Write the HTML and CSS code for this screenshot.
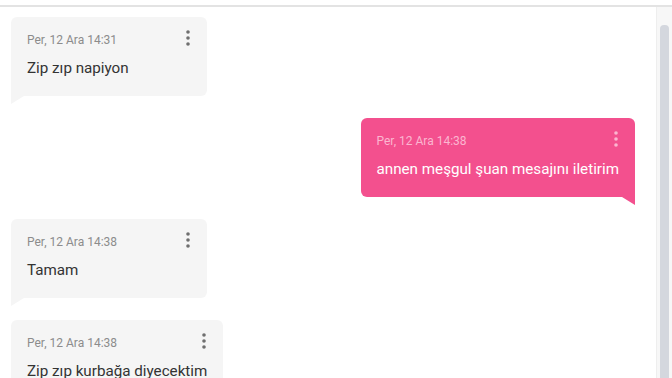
FILE: index.html
```
<!DOCTYPE html>
<html lang="tr">
<head>
    <meta charset="UTF-8">
    <meta name="viewport" content="width=device-width, initial-scale=1.0">
    <title>Mesajlar</title>
    <link rel="stylesheet" href="styles.css">
</head>
<body>
    <div class="topbar"></div>

    <div class="wrapper">
        <div class="chat">
            <div class="row">
                <div class="bubble in">
                    <div class="time">Per, 12 Ara 14:31</div>
                    <div class="text">Zip zıp napiyon</div>
                    <svg class="menu" width="4" height="16" viewBox="0 0 4 16"><circle cx="2" cy="2" r="1.8"/><circle cx="2" cy="8" r="1.8"/><circle cx="2" cy="14" r="1.8"/></svg>
                </div>
            </div>

            <div class="row mine">
                <div class="bubble out">
                    <div class="time">Per, 12 Ara 14:38</div>
                    <div class="text">annen meşgul şuan mesajını iletirim</div>
                    <svg class="menu" width="4" height="16" viewBox="0 0 4 16"><circle cx="2" cy="2" r="1.8"/><circle cx="2" cy="8" r="1.8"/><circle cx="2" cy="14" r="1.8"/></svg>
                </div>
            </div>

            <div class="row">
                <div class="bubble in">
                    <div class="time">Per, 12 Ara 14:38</div>
                    <div class="text">Tamam</div>
                    <svg class="menu" width="4" height="16" viewBox="0 0 4 16"><circle cx="2" cy="2" r="1.8"/><circle cx="2" cy="8" r="1.8"/><circle cx="2" cy="14" r="1.8"/></svg>
                </div>
            </div>

            <div class="row">
                <div class="bubble in">
                    <div class="time">Per, 12 Ara 14:38</div>
                    <div class="text">Zip zıp kurbağa diyecektim</div>
                    <svg class="menu" width="4" height="16" viewBox="0 0 4 16"><circle cx="2" cy="2" r="1.8"/><circle cx="2" cy="8" r="1.8"/><circle cx="2" cy="14" r="1.8"/></svg>
                </div>
            </div>
        </div>

        <div class="scroll">
            <div class="thumb"></div>
        </div>
    </div>
</body>
</html>
```

FILE: styles.css
```
html, body {
    margin: 0;
    padding: 0;
    height: 100%;
    overflow: hidden;
}
body {
    font-family: Roboto, "Noto Sans", Arial, sans-serif;
    background-color: #fff;
    color: #333;
}
.topbar {
    height: 5px;
    border-bottom: 2px solid #e3e3e3;
}
.wrapper {
    display: flex;
    height: calc(100% - 7px);
}
.chat {
    flex: 1;
    display: flex;
    flex-direction: column;
    gap: 14px;
    padding: 10px 21px 0 11px;
}
.row {
    display: flex;
    justify-content: flex-start;
}
.row.mine {
    justify-content: flex-end;
}
.bubble {
    position: relative;
    min-width: 164px;
    padding: 15px 16px 18px 16px;
    border-radius: 6px;
    margin-bottom: 8px;
}
.bubble::after {
    content: "";
    position: absolute;
    top: 100%;
    width: 0;
    height: 0;
    border-style: solid;
}
.bubble.in {
    background-color: #f5f5f5;
    border-bottom-left-radius: 0;
}
.bubble.in::after {
    left: 0;
    border-width: 8px 13px 0 0;
    border-color: #f5f5f5 transparent transparent transparent;
}
.bubble.out {
    background-color: #f3508e;
    color: #fff;
    border-bottom-right-radius: 0;
}
.bubble.out::after {
    right: 0;
    border-width: 0 13px 8px 0;
    border-color: transparent #f3508e transparent transparent;
}
.time {
    font-size: 12px;
    line-height: 16px;
    color: #8c8c8c;
    margin-bottom: 10px;
}
.out .time {
    color: #fbb6d0;
}
.text {
    font-size: 15.2px;
    line-height: 20px;
}
.menu {
    position: absolute;
    top: 13px;
    right: 17px;
    fill: #6f6f6f;
}
.out .menu {
    fill: #fbb6d0;
}
.scroll {
    width: 16px;
    background-color: #f7f7f7;
    border-left: 1px solid #eeeeee;
    padding: 18px 3px 0 3px;
    box-sizing: border-box;
}
.thumb {
    height: 100%;
    background-color: #d4d7de;
    border-radius: 4px 4px 0 0;
}
```
